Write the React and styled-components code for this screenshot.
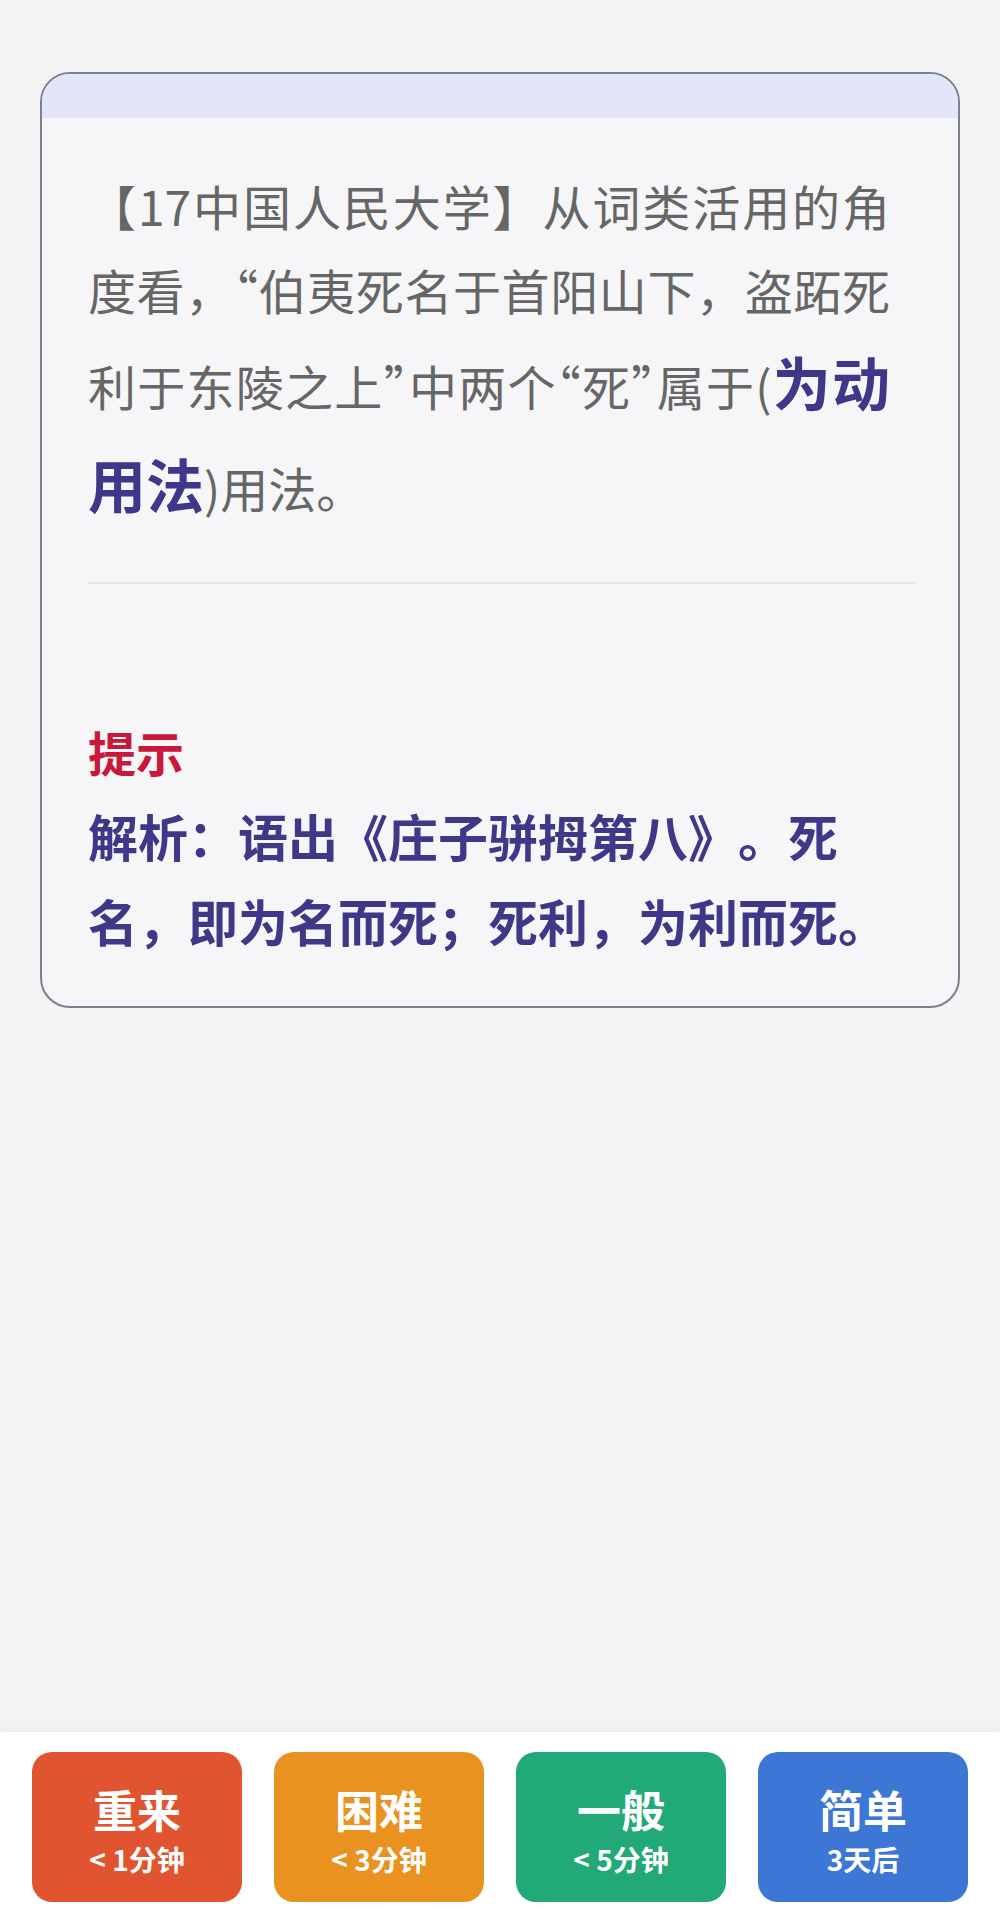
import React from "react";
import styled, { createGlobalStyle } from "styled-components";

const GlobalStyle = createGlobalStyle`
  html, body {
    margin: 0;
    padding: 0;
    background: #f3f3f4;
  }
  body {
    font-family: "Noto Sans CJK SC", "Noto Sans", sans-serif;
  }
  * { box-sizing: border-box; }
`;

const Page = styled.div`
  min-height: 100vh;
  display: flex;
  flex-direction: column;
  background: #f3f3f4;
`;

const Main = styled.main`
  flex: 1;
  padding: 72px 40px 0;
`;

const Card = styled.section`
  border: 2px solid #7a8190;
  border-radius: 30px;
  background: #f6f6f8;
  overflow: hidden;
`;

const CardHeader = styled.div`
  height: 44px;
  background: #e2e6f8;
`;

const CardBody = styled.div`
  padding: 45px 46px 43px;
`;

const Question = styled.p`
  margin: 0 22px 0 0;
  font-size: 48px;
  line-height: 1.75;
  color: #666666;
  text-align: justify;
`;

const Quote = styled.span`
  font-feature-settings: "halt";
`;

const Answer = styled.strong`
  font-size: 58px;
  font-weight: 700;
  color: #3f3787;
`;

const Divider = styled.hr`
  border: 0;
  height: 2px;
  background: #e6e6e9;
  margin: 48px -4px 125px 0;
`;

const HintLabel = styled.div`
  font-size: 48px;
  line-height: 84px;
  font-weight: 700;
  color: #c8183c;
`;

const HintText = styled.p`
  margin: 0;
  font-size: 50px;
  line-height: 85px;
  font-weight: 700;
  color: #3f3787;
  text-spacing-trim: space-all;
`;

const Bar = styled.footer`
  background: #ffffff;
  padding: 20px 32px 19px;
  display: grid;
  grid-template-columns: repeat(4, 1fr);
  gap: 32px;
  box-shadow: 0 -2px 8px rgba(0, 0, 0, 0.03);
`;

const RateButton = styled.button`
  height: 150px;
  border: 0;
  border-radius: 20px;
  background: ${(p) => p.$bg};
  color: #ffffff;
  display: flex;
  flex-direction: column;
  align-items: center;
  justify-content: center;
  padding: 14px 0 0;
  font-family: "Noto Sans CJK SC", sans-serif;
  cursor: pointer;
`;

const RateTitle = styled.span`
  font-size: 44px;
  line-height: 50px;
  font-weight: 700;
`;

const RateSub = styled.span`
  font-size: 28px;
  line-height: 50px;
  font-weight: 700;
`;

const buttons = [
  { title: "重来", sub: "< 1分钟", bg: "#e0552f" },
  { title: "困难", sub: "< 3分钟", bg: "#e9921f" },
  { title: "一般", sub: "< 5分钟", bg: "#22a978" },
  { title: "简单", sub: "3天后", bg: "#3c77d5" },
];

export default function App() {
  return (
    <>
      <GlobalStyle />
      <Page lang="zh-CN">
        <Main>
          <Card>
            <CardHeader />
            <CardBody>
              <Question>
                【17中国人民大学】从词类活用的角度看，<Quote>“</Quote>伯夷死名于首阳山下，盗跖死利于东陵之上<Quote>”</Quote>中两个<Quote>“</Quote>死<Quote>”</Quote>属于(<Answer>为动用法</Answer>)用法。
              </Question>
              <Divider />
              <HintLabel>提示</HintLabel>
              <HintText>解析：语出《庄子骈拇第八》。死名，即为名而死；死利，为利而死。</HintText>
            </CardBody>
          </Card>
        </Main>
        <Bar>
          {buttons.map((b) => (
            <RateButton key={b.title} $bg={b.bg}>
              <RateTitle>{b.title}</RateTitle>
              <RateSub>{b.sub}</RateSub>
            </RateButton>
          ))}
        </Bar>
      </Page>
    </>
  );
}
